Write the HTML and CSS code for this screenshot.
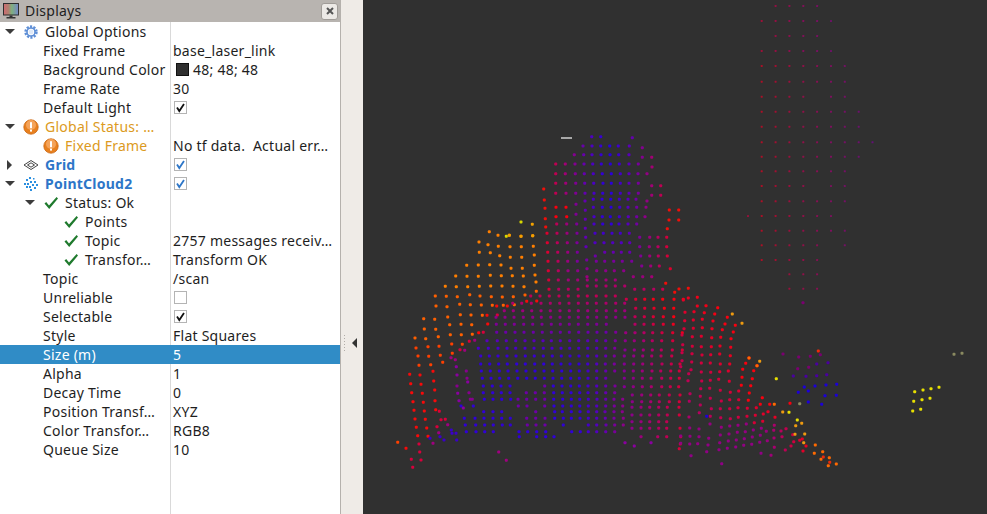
FILE: index.html
```html
<!DOCTYPE html>
<html lang="en">
<head>
<meta charset="utf-8">
<title>Displays</title>
<link rel="stylesheet" href="styles.css">
</head>
<body>
<svg class="defs" width="0" height="0" aria-hidden="true">
  <symbol id="i-warn" viewBox="0 0 16 16">
    <circle cx="8" cy="8" r="7.2" fill="#e8801e" stroke="#c9650f" stroke-width=".8"/>
    <circle cx="8" cy="6" r="5" fill="#f4a35a"/>
    <rect x="7" y="3.2" width="2" height="6" fill="#fff"/>
    <rect x="7" y="10.6" width="2" height="2" fill="#fff"/>
  </symbol>
  <symbol id="i-check" viewBox="0 0 16 16">
    <path d="M1.5 8.5 L3.2 7 L6 10.4 L13.6 2 L15 3.4 L6.2 14 Z" fill="#1f7a2d"/>
  </symbol>
  <symbol id="i-tick" viewBox="0 0 13 13">
    <path d="M3 6.5 L5.3 10 L10 3" fill="none" stroke="currentColor" stroke-width="1.8"/>
  </symbol>
</svg>
<div class="app">
  <section class="panel">
    <header class="titlebar">
      <svg class="monitor" viewBox="0 0 16 16" width="16" height="16">
        <defs>
          <linearGradient id="screen" x1="0" x2="1" y1="0" y2="0">
            <stop offset="0" stop-color="#d06a70"/>
            <stop offset=".33" stop-color="#b07f70"/>
            <stop offset=".55" stop-color="#7fb07f"/>
            <stop offset="1" stop-color="#7486c8"/>
          </linearGradient>
        </defs>
        <rect x=".5" y=".5" width="15" height="11.5" fill="url(#screen)" stroke="#2e2e2e"/>
        <rect x="6.5" y="12.5" width="3" height="2" fill="#333"/>
        <rect x="3.5" y="14" width="9" height="1.5" fill="#333"/>
      </svg>
      <span class="title">Displays</span>
      <button class="close" type="button" aria-label="Close">
        <svg viewBox="0 0 8 8" width="8" height="8"><path d="M1 1 L7 7 M7 1 L1 7" stroke="#555" stroke-width="2"/></svg>
      </button>
    </header>
    <div class="tree">
      <div class="row">
        <div class="name parent"><span class="arrow down"></span>
          <svg class="ico" viewBox="0 0 16 16" width="16" height="16"><circle cx="8" cy="8" r="5.4" fill="none" stroke="#5f8fd6" stroke-width="2.6" stroke-dasharray="2.1 1.3"/><circle cx="8" cy="8" r="4" fill="none" stroke="#5f8fd6" stroke-width="1.6"/><circle cx="8" cy="8" r="2.4" fill="#dfe9f7"/></svg>
          <span class="label">Global Options</span></div>
        <div class="value"></div>
      </div>
      <div class="row"><div class="name prop">Fixed Frame</div><div class="value">base_laser_link</div></div>
      <div class="row"><div class="name prop">Background Color</div><div class="value"><span class="swatch"></span>48; 48; 48</div></div>
      <div class="row"><div class="name prop">Frame Rate</div><div class="value">30</div></div>
      <div class="row"><div class="name prop">Default Light</div><div class="value"><span class="box"><svg width="13" height="13"><use href="#i-tick"/></svg></span></div></div>
      <div class="row warn">
        <div class="name parent"><span class="arrow down"></span><svg class="ico" width="16" height="16"><use href="#i-warn"/></svg><span class="label">Global Status: …</span></div>
        <div class="value"></div>
      </div>
      <div class="row">
        <div class="name child warn"><svg class="ico" width="16" height="16"><use href="#i-warn"/></svg><span class="label">Fixed Frame</span></div>
        <div class="value keep">No tf data.  Actual err…</div>
      </div>
      <div class="row display">
        <div class="name parent"><span class="arrow right"></span>
          <svg class="ico" viewBox="0 0 16 16" width="16" height="16"><g fill="none" stroke="#444" stroke-width="1"><path d="M1 8 L8 3.5 L15 8 L8 12.5 Z"/><path d="M4.5 8 L8 5.8 L11.5 8 L8 10.2 Z"/></g></svg>
          <span class="label">Grid</span></div>
        <div class="value"><span class="box blue"><svg width="13" height="13"><use href="#i-tick"/></svg></span></div>
      </div>
      <div class="row display">
        <div class="name parent"><span class="arrow down"></span>
          <svg class="ico" viewBox="0 0 16 16" width="16" height="16"><g fill="#2b8fe0"><rect x="6" y="1" width="2" height="2"/><rect x="10" y="2" width="1.5" height="1.5"/><rect x="3" y="3" width="2" height="2"/><rect x="7" y="5" width="2" height="2"/><rect x="11" y="5" width="2" height="2"/><rect x="1" y="7" width="2" height="2"/><rect x="4" y="7" width="2" height="2"/><rect x="9" y="8" width="2" height="2"/><rect x="13" y="8" width="2" height="2"/><rect x="3" y="10" width="2" height="2"/><rect x="6" y="10" width="2" height="2"/><rect x="11" y="11" width="2" height="2"/><rect x="7" y="13" width="2" height="2"/></g></svg>
          <span class="label">PointCloud2</span></div>
        <div class="value"><span class="box blue"><svg width="13" height="13"><use href="#i-tick"/></svg></span></div>
      </div>
      <div class="row">
        <div class="name parent nested"><span class="arrow down"></span><svg class="ico" width="16" height="16"><use href="#i-check"/></svg><span class="label">Status: Ok</span></div>
        <div class="value"></div>
      </div>
      <div class="row"><div class="name grandchild"><svg class="ico" width="16" height="16"><use href="#i-check"/></svg><span class="label">Points</span></div><div class="value"></div></div>
      <div class="row"><div class="name grandchild"><svg class="ico" width="16" height="16"><use href="#i-check"/></svg><span class="label">Topic</span></div><div class="value">2757 messages receiv…</div></div>
      <div class="row"><div class="name grandchild"><svg class="ico" width="16" height="16"><use href="#i-check"/></svg><span class="label">Transfor…</span></div><div class="value">Transform OK</div></div>
      <div class="row"><div class="name prop">Topic</div><div class="value">/scan</div></div>
      <div class="row"><div class="name prop">Unreliable</div><div class="value"><span class="box"></span></div></div>
      <div class="row"><div class="name prop">Selectable</div><div class="value"><span class="box"><svg width="13" height="13"><use href="#i-tick"/></svg></span></div></div>
      <div class="row"><div class="name prop">Style</div><div class="value">Flat Squares</div></div>
      <div class="row selected"><div class="name prop">Size (m)</div><div class="value">5</div></div>
      <div class="row"><div class="name prop">Alpha</div><div class="value">1</div></div>
      <div class="row"><div class="name prop">Decay Time</div><div class="value">0</div></div>
      <div class="row"><div class="name prop">Position Transf…</div><div class="value">XYZ</div></div>
      <div class="row"><div class="name prop">Color Transfor…</div><div class="value">RGB8</div></div>
      <div class="row"><div class="name prop">Queue Size</div><div class="value">10</div></div>
      <div class="row filler"><div class="name"></div><div class="value"></div></div>
    </div>
  </section>
  <div class="splitter"><span class="grip"></span><span class="collapse"></span></div>
  <main class="view"><svg id="cloud" class="cloud" viewBox="363 0 624 514" width="624" height="514"></svg></main>
</div>
<script src="cloud.js"></script>
</body>
</html>
```
FILE: styles.css
```css
* { box-sizing: border-box; }
html, body { margin: 0; padding: 0; height: 100%; overflow: hidden; }
body { font-family: "Noto Sans", "Open Sans", sans-serif; font-size: 14px; letter-spacing: .25px; color: #1e1e1e; background: #efebe7; }
.defs { position: absolute; }
.app { display: flex; height: 514px; width: 987px; }

.panel { width: 341px; display: flex; flex-direction: column; background: #fff; border-right: 1px solid #b5b1ad; }
.titlebar { height: 22px; flex: none; display: flex; align-items: center; background: #b8b4b0; padding: 0 2px 0 3px; }
.monitor { flex: none; }
.title { margin-left: 6px; line-height: 22px; }
.close { margin-left: auto; width: 17px; height: 17px; padding: 0; display: flex; align-items: center; justify-content: center; background: #ece9e6; border: 1px solid #a09c98; border-radius: 3px; }

.tree { flex: 1; display: flex; flex-direction: column; }
.row { height: 19px; flex: none; display: grid; grid-template-columns: 171px 1fr; line-height: 19px; }
.row.filler { flex: 1; }
.name { display: flex; align-items: center; white-space: nowrap; border-right: 1px solid #d9d9d9; overflow: hidden; }
.value { display: flex; align-items: center; padding-left: 2px; white-space: nowrap; overflow: hidden; }
.value.keep { white-space: pre; }
.prop { padding-left: 43px; }
.parent { padding-left: 5px; }
.parent.nested { padding-left: 25px; }
.child { padding-left: 44px; }
.grandchild { padding-left: 64px; }
.ico { flex: none; margin: 0 1px 0 -1px; }
.label { margin-left: 5px; }

.arrow { flex: none; width: 19px; display: block; height: 8px; position: relative; }
.arrow::before { content: ""; position: absolute; border-style: solid; border-color: transparent; }
.arrow.down::before { left: 0; top: 1px; border-width: 5px 5px 0 5px; border-top-color: #3c3c3c; }
.arrow.right::before { left: 2px; top: -1px; border-width: 5px 0 5px 5px; border-left-color: #3c3c3c; }

.warn .label { color: #dc9a22; }
.display .label { color: #2d76c8; font-weight: 700; }
.selected { background: #308cc6; color: #fff; }
.selected .name { border-right-color: transparent; }

.box { width: 13px; height: 13px; display: block; margin-left: 1px; background: #fff; border: 1px solid #b4b4b4; color: #111; position: relative; }
.box svg { position: absolute; left: -1px; top: -1px; }
.box.blue { color: #2d76c8; }
.swatch { width: 13px; height: 13px; margin: 0 4px 0 3px; background: #303030; border: 1px solid #111; }

.splitter { width: 22px; flex: none; position: relative; background: #efebe7; }
.grip { position: absolute; left: 3px; top: 335px; height: 18px; width: 1px; background: repeating-linear-gradient(#b0aca8 0 1px, transparent 1px 3px); }
.collapse { position: absolute; left: 11px; top: 338px; border-style: solid; border-color: transparent; border-width: 5px 5px 5px 0; border-right-color: #333; }

.view { flex: 1; background: #303030; overflow: hidden; }
.cloud { display: block; }
```
FILE: cloud.js
```js
// Point cloud sample drawn on the 3D view. Coordinates were read off 3x crops,
// so each group records the crop origin it was measured in.
var svg = document.getElementById('cloud');
var NS = 'http://www.w3.org/2000/svg';

var RAMP = [
  [0.0, [35, 0, 225]], [0.3, [85, 0, 190]], [0.5, [125, 0, 150]],
  [0.7, [165, 0, 115]], [0.9, [205, 0, 65]], [1.1, [250, 0, 15]]
];
function ramp(t) {
  t = Math.max(0, Math.min(1.1, t));
  for (var i = 1; i < RAMP.length; i++) {
    if (t <= RAMP[i][0]) {
      var a = RAMP[i - 1], b = RAMP[i], k = (t - a[0]) / (b[0] - a[0]);
      return 'rgb(' + [0, 1, 2].map(function (c) { return Math.round(a[1][c] + (b[1][c] - a[1][c]) * k); }).join(',') + ')';
    }
  }
  return 'rgb(250,0,15)';
}
function dot(x, y, color, size, opacity) {
  var r = document.createElementNS(NS, 'rect');
  size = size || 3;
  r.setAttribute('x', (x - size / 2).toFixed(1));
  r.setAttribute('y', (y - size / 2).toFixed(1));
  r.setAttribute('width', size);
  r.setAttribute('height', size);
  r.setAttribute('rx', size > 2 ? 1 : 0.4);
  r.setAttribute('fill', color);
  if (opacity) r.setAttribute('opacity', opacity);
  svg.appendChild(r);
}
function flat(ox, oy, pts, color) {
  for (var i = 0; i < pts.length; i += 2) dot(ox + pts[i] / 3, oy + pts[i + 1] / 3, color);
}

// --- faint tall grid, top right (real y values, columns from x = 761.7)
var RY = [6, 21, 36, 51, 66, 81.7, 96.7, 111.7, 126.7, 142.3, 156.7, 171.3, 186, 201.3, 216, 230.7, 245.3, 260, 274.3, 288.7];
var RC = ['.xxxx', 'xxxxxx', '.xxxx', 'xxxxxx', 'xxxxxxx', 'xxxxxxx', 'xxxx.xx', 'xxxxxxxx', 'xxxxxxxx', 'xxxxxxxxx', 'xxxxxxxx', 'xxxxxxx', 'xxxx.xx', 'xxxxxxx', 'xxxxxx', 'xxxxxxx', 'xxxxx.x', 'xxxxx', '..xxx', '..xxx'];
RY.forEach(function (y, r) {
  RC[r].split('').forEach(function (c, i) {
    if (c !== 'x') return;
    dot(761.7 + i * 13.85, y, ramp(1.02 - i * 0.065 - (r < 4 ? 0.1 : 0)), 2, 0.68);
  });
});
dot(748, 216, ramp(0.9), 2, 0.68);

// --- dome (crop origin 390,120): [zy, zx list]
var DOME = [
  [50, [605, 632]], [53, [727]], [78, [579, 606, 632, 659, 685, 718]], [83, [757]],
  [104, [553, 581, 606, 633, 660, 686, 717]], [112, [757, 785]],
  [132, [497, 526, 555, 582, 608, 634, 661, 688, 717, 745]], [141, [786]],
  [161, [497, 526, 556, 583, 610, 637, 664, 691, 717, 744, 771]],
  [190, [497, 527, 557, 584, 611, 639, 664, 691, 717, 745]], [197, [785, 812]],
  [220, [497, 528, 557, 585, 612, 638, 664, 691, 717, 745]], [226, [785, 812]],
  [238, [610, 636, 662, 688, 714, 738]], [243, [585, 771]], [253, [558]],
  [262, [498, 528, 610, 637, 663, 689, 714, 740, 768]], [271, [586]],
  [290, [498, 530, 612, 637, 661, 688, 715, 740, 765]], [283, [558]], [298, [586]],
  [312, [500, 530, 560, 612, 638, 664, 687, 714, 740]], [325, [586]],
  [340, [471, 501, 531, 561, 615, 640, 666, 691, 718]], [352, [587, 749, 779, 804, 830]],
  [368, [472, 502, 532, 561, 615, 642, 668, 694, 719]], [380, [588, 749, 778, 804, 830]],
  [397, [473, 503, 533, 562, 644, 670, 694, 719]], [408, [616, 752, 779, 805, 832]], [420, [590]],
  [424, [474, 504, 533, 562, 619, 644, 671, 697, 725]], [438, [755, 782, 808]], [446, [591, 841]],
  [452, [475, 505, 534, 563, 620, 647, 673, 701]], [470, [591, 730, 758, 785]],
  [480, [476, 505, 535, 563, 592, 619, 648, 676]], [498, [592, 619, 648, 676, 704]], [508, [477, 506, 535, 564, 734, 762, 791, 818]]
];
DOME.forEach(function (row) {
  row[1].forEach(function (zx) {
    var zy = row[0];
    var t = Math.max(Math.abs(zx - 655) / 190, (zy - 290) / 280);
    if (zx < 540 && zy > 250 && zy < 300) t = 1.1;
    dot(390 + zx / 3, 120 + zy / 3, ramp(t));
  });
});
flat(390, 120, [461, 207, 463, 240, 465, 265, 466, 296, 467, 321, 832, 326, 838, 270, 866, 270, 837, 300, 866, 300, 827, 490, 867, 507, 895, 505, 854, 517], '#f00f0a');

// --- orange fan, upper left (crop origin 390,120)
flat(390, 120, [298, 335, 324, 346, 358, 346, 393, 349, 428, 347, 267, 366, 294, 374, 325, 379, 360, 380, 394, 380, 430, 379, 268, 397, 301, 398, 329, 407, 361, 412, 395, 412, 433, 405, 230, 436, 265, 435, 299, 434, 333, 435, 363, 445, 397, 445, 433, 436, 197, 468, 231, 469, 265, 469, 301, 466, 334, 467, 367, 467, 400, 468, 435, 465, 438, 486, 166, 499, 199, 500, 233, 500, 268, 499, 302, 498, 336, 498, 369, 499, 402, 500], '#ff7f00');
flat(390, 120, [427, 313, 393, 349, 358, 346, 428, 347], '#f2a100');
flat(390, 120, [393, 306, 349, 349], '#d8d800');

// --- left fan (crop origin 390,290)
flat(390, 290, [136, 18, 169, 19, 202, 20, 239, 14, 270, 18, 304, 20, 337, 21, 370, 20, 405, 15, 439, 4, 138, 48, 171, 50, 209, 43, 241, 44, 274, 45, 307, 46, 340, 46, 373, 44, 101, 86, 134, 88, 173, 81, 211, 74, 243, 75, 277, 76, 103, 117, 137, 118, 179, 104, 213, 103, 245, 104, 75, 144, 107, 146, 145, 140, 181, 134, 214, 134, 247, 133], '#ff6000');
flat(390, 290, [78, 174, 114, 170, 147, 169, 185, 162, 217, 163, 84, 198, 116, 199, 151, 196, 187, 190, 87, 226, 122, 224, 158, 217, 23, 457], '#ff4000');
flat(390, 290, [59, 253, 90, 255, 129, 244, 62, 281, 93, 283, 131, 273, 65, 308, 97, 310, 134, 300, 69, 335, 100, 337, 135, 332, 72, 361, 103, 363, 137, 359, 75, 387, 106, 388, 79, 412, 110, 414, 83, 437, 114, 439, 48, 475, 291, 76, 320, 48, 352, 48, 293, 102, 266, 128, 410, 34, 440, 33], '#f80a0a');
flat(390, 290, [148, 364, 153, 389, 166, 388, 141, 410, 87, 462, 89, 486, 64, 508, 93, 510, 68, 532, 210, 179, 238, 154, 280, 127, 322, 75], '#d8003c');
flat(390, 290, [129, 460, 146, 428, 173, 404, 326, 486, 349, 511, 254, 151, 224, 181, 183, 203, 196, 209], '#a00080');
flat(390, 290, [184, 420, 198, 430, 120, 445, 150, 440, 162, 450, 200, 450, 186, 430], '#3a00c8');

// --- central block (crop origin 390,290)
var BLOCK = [
  [18, [422, 450, 478, 507, 535, 565, 592, 619, 648, 676]],
  [40, [368, 395, 424, 453, 481, 509, 537, 565, 592, 619, 648, 677, 704]],
  [62, [343, 370, 398, 425, 453, 481, 510, 538, 565, 593, 620, 649, 677, 704]],
  [82, [318, 345, 372, 400, 428, 454, 482, 510, 538, 565, 593, 620, 649, 677, 705]],
  [103, [319, 346, 373, 401, 428, 456, 484, 511, 538, 565, 593, 620, 649]],
  [127, [320, 347, 375, 402, 430, 457, 484, 511, 538, 566, 594, 621, 648, 677]],
  [152, [291, 322, 349, 377, 405, 432, 459, 484, 511, 539, 566, 593, 620, 647, 676]],
  [175, [265, 295, 324, 351, 377, 405, 432, 460, 486, 513, 539, 566, 593, 620, 647, 674]],
  [198, [272, 298, 324, 351, 378, 406, 433, 460, 487, 514, 540, 567, 593, 620, 647, 673]],
  [222, [272, 299, 326, 352, 380, 406, 434, 461, 487, 513, 540, 567, 593, 620, 646, 673]],
  [243, [229, 274, 301, 328, 354, 381, 408, 435, 462, 488, 515, 542, 568, 594, 620, 647, 674]],
  [265, [231, 277, 303, 329, 356, 383, 410, 436, 463, 489, 515, 542, 568, 594, 620, 647]],
  [288, [201, 280, 307, 333, 360, 464, 490, 516, 542, 568, 594, 620, 647, 675]],
  [308, [237, 280, 308, 334, 360, 409, 436, 463, 491, 517, 543, 569, 594, 620, 647, 674]],
  [328, [241, 247, 283, 309, 335, 362, 384, 410, 437, 464, 491, 518, 544, 569, 595, 621, 647, 672, 698]],
  [348, [213, 250, 385, 411, 464, 492, 518, 544, 569, 595, 620, 647, 673, 698]],
  [365, [281, 309, 335, 437, 494, 517, 544, 570, 595, 620, 645, 672, 697]],
  [385, [223, 255, 282, 309, 335, 361, 410, 437, 465, 494, 520, 544, 570, 595, 620, 646, 672, 700]],
  [405, [226, 257, 284, 310, 337, 361, 412, 438, 465, 520, 595, 620, 648, 674, 700]],
  [425, [229, 258, 284, 310, 387, 413, 440, 467, 545, 571, 595, 620, 647, 674]],
  [440, [388, 440, 467, 492]]
];
BLOCK.forEach(function (row) {
  row[1].forEach(function (zx) {
    var zy = row[0];
    var t = Math.max(0.08, (zx - 540) / 280, (235 - zy) / 265);
    if (zx < 260 && zy < 345) t = Math.max(t, 0.55);
    if (zx > 370 && zx < 470 && zy > 280 && zy < 420) t = Math.max(t, 0.42);
    dot(390 + zx / 3, 290 + zy / 3, ramp(t));
  });
});
flat(390, 290, [199, 230, 201, 255, 233, 276, 203, 310, 207, 332, 220, 354, 705, 458, 733, 468, 783, 458], '#8a00a0');

// --- magenta bridge between block and shoulder (crop origin 390,290)
var BRIDGE = [
  [28, [709, 737, 764, 790, 818, 852, 880]],
  [55, [737, 764, 792, 823, 851]],
  [80, [735, 763, 790, 820, 851]],
  [103, [735, 762, 790, 820, 850]],
  [128, [707, 735, 762, 788, 816, 848, 877]],
  [152, [706, 733, 761, 787, 815, 848]],
  [180, [705, 733, 760, 787, 814, 847, 877]],
  [198, [703, 731, 758, 785, 813, 845]],
  [222, [703, 731, 758, 785, 816, 844, 870]],
  [243, [703, 730, 757, 786, 812, 842, 868]],
  [265, [703, 730, 757, 783, 815, 842, 868]],
  [290, [703, 730, 757, 784, 815, 841, 866]],
  [315, [727, 755, 782, 808, 838, 870]],
  [335, [727, 755, 782, 808, 838, 868]],
  [352, [726, 753, 779, 806, 832, 867]],
  [375, [726, 753, 779, 806, 832, 868]],
  [395, [726, 753, 779, 806, 830]],
  [415, [726, 753, 779, 806, 830, 870]],
  [440, [753, 803, 830, 872]],
  [462, [871]], [476, [868]]
];
BRIDGE.forEach(function (row) {
  row[1].forEach(function (zx) {
    var t = 0.52 + (zx - 700) / 420 + Math.max(0, (170 - row[0]) / 420);
    dot(390 + zx / 3, 290 + row[0] / 3, ramp(t));
  });
});

// --- right shoulder (crop origin 680,290): crimson to red
var SHOULDER = [10, 30, 25, 24, 52, 22, 15, 67, 42, 65, 52, 48, 78, 47, 73, 68, 113, 53, 14, 92, 40, 90, 67, 88, 104, 72, 99, 93, 142, 82, 12, 116, 40, 115, 67, 113, 96, 116, 127, 119, 135, 102, 166, 106, 6, 135, 37, 140, 64, 139, 95, 143, 122, 142, 153, 146, 160, 126, 8, 164, 37, 169, 64, 170, 94, 170, 120, 168, 152, 172, 6, 188, 36, 191, 66, 195, 92, 194, 119, 192, 151, 197, 6, 212, 35, 216, 64, 219, 91, 219, 121, 222, 149, 222, 197, 220, 207, 204, 2, 230, 33, 239, 64, 246, 92, 247, 119, 245, 145, 243, 188, 238, 221, 242, 231, 227, 26, 251, 65, 273, 91, 271, 116, 268, 148, 274, 186, 262, 217, 266, 24, 272, 62, 296, 89, 295, 121, 301, 151, 307, 176, 303, 184, 286, 212, 287, 208, 309, 30, 311, 61, 319, 91, 325, 124, 333, 149, 329, 176, 329, 205, 331, 247, 323, 241, 343, 269, 343, 330, 340, 28, 334, 61, 345, 94, 356, 121, 356, 149, 356, 174, 353, 202, 355, 229, 353, 264, 365, 250, 372, 226, 376, 201, 379, 175, 382, 151, 386, 122, 383, 91, 379, 58, 368, 27, 381, 285, 382, 29, 414, 57, 417, 90, 402, 124, 412, 149, 408, 174, 406, 199, 402, 223, 398, 248, 394, 283, 406, 2, 438, 30, 439, 57, 440, 86, 445, 121, 435, 147, 432, 172, 427, 196, 425, 220, 420, 244, 415, 259, 424, 281, 421, 303, 423, 318, 416, 338, 434, 2, 460, 29, 462, 53, 461, 84, 465, 119, 458, 145, 453, 169, 450, 193, 446, 217, 441, 241, 436, 262, 452, 282, 444, 306, 440, 341, 455, 359, 451, 367, 447, 33, 497, 80, 485, 117, 479, 142, 475, 167, 471, 191, 466, 215, 463, 239, 457, 283, 472, 316, 480, 333, 468, 369, 483, 378, 468, 125, 521, 243, 490, 273, 496];
for (var s = 0; s < SHOULDER.length; s += 2) {
  var zx = SHOULDER[s], zy = SHOULDER[s + 1];
  var outer = zx + (340 - zy) * 0.75;
  var t = 0.74 + outer / 900;
  if (zx > 180 && zy < 345) t = 1.1;
  if (zy > 400) t = 0.72 + Math.max(0, zx - 250) / 300 - zy / 4000;
  dot(680 + zx / 3, 290 + zy / 3, ramp(t));
}

// --- warm accents and side clusters (crop origin 680,290)
flat(680, 290, [207, 204, 283, 343, 403, 490, 428, 485, 448, 503, 423, 508, 445, 527, 469, 522, 406, 465, 231, 227], '#ff6a00');
flat(680, 290, [430, 501, 449, 517, 415, 183], '#ee2a0a');
flat(680, 290, [157, 72, 186, 100, 239, 214, 308, 366, 365, 400, 347, 407, 345, 433, 374, 432, 371, 458], '#ee9a10');
flat(680, 290, [289, 266, 327, 367, 352, 390, 704, 305, 729, 300, 753, 296, 777, 292, 701, 334, 726, 329, 750, 325, 698, 363, 722, 358], '#e8e000');
flat(680, 290, [359, 341, 822, 193, 846, 190], '#8a8a60');
flat(680, 290, [80, 379, 355, 307, 373, 291, 385, 303, 405, 288, 438, 285, 470, 283, 435, 317, 469, 316, 385, 336, 425, 343], '#1c00d8');
flat(680, 290, [440, 254, 410, 257, 378, 259, 340, 258, 410, 222, 444, 218], '#4a00a0');
flat(680, 290, [353, 236, 386, 232, 309, 192, 356, 201, 391, 199, 421, 194, 369, 38], '#7a0070');

// --- pale sliver above the dome
var sliver = document.createElementNS(NS, 'rect');
sliver.setAttribute('x', 561); sliver.setAttribute('y', 137);
sliver.setAttribute('width', 11); sliver.setAttribute('height', 2);
sliver.setAttribute('fill', '#a8a8a8');
svg.appendChild(sliver);
```
